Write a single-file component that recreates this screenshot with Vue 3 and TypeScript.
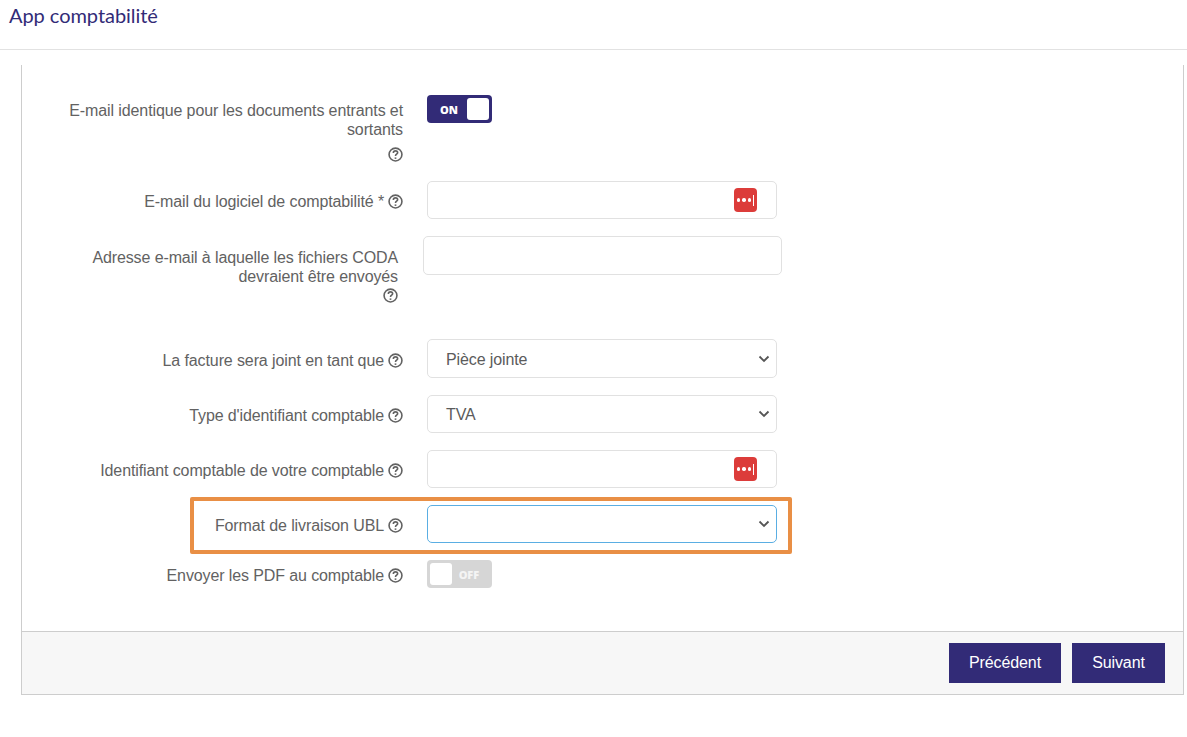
<script setup lang="ts">
interface Row {
  label: string[];
  kind: 'on' | 'off' | 'pass' | 'text' | 'select';
  value?: string;
  cls: string;
  iconBelow?: boolean;
  focus?: boolean;
}
const rows: Row[] = [
  { label: ['E-mail identique pour les documents entrants et', 'sortants'], kind: 'on', cls: 'r1', iconBelow: true },
  { label: ['E-mail du logiciel de comptabilité *'], kind: 'pass', cls: 'r2' },
  { label: ['Adresse e-mail à laquelle les fichiers CODA', 'devraient être envoyés'], kind: 'text', cls: 'r3', iconBelow: true },
  { label: ['La facture sera joint en tant que'], kind: 'select', value: 'Pièce jointe', cls: 'r4' },
  { label: ["Type d'identifiant comptable"], kind: 'select', value: 'TVA', cls: 'r5' },
  { label: ['Identifiant comptable de votre comptable'], kind: 'pass', cls: 'r6' },
  { label: ['Format de livraison UBL'], kind: 'select', value: '', cls: 'r7', focus: true },
  { label: ['Envoyer les PDF au comptable'], kind: 'off', cls: 'r8' },
];
</script>

<template>
  <div class="page">
    <header class="head"><h1>App comptabilité</h1></header>
    <section class="panel">
      <div class="body">
        <div v-for="r in rows" :key="r.cls" class="row" :class="r.cls">
          <div class="label">
            <template v-for="(l, i) in r.label" :key="i">
              <span class="line">{{ l }}<svg v-if="!r.iconBelow" class="help" viewBox="0 0 14 14"><circle cx="7" cy="7" r="6" /><path d="M5 5.5C5 4.2 6 3.6 7 3.6S9 4.3 9 5.4C9 6.7 7 6.8 7 8.3" /><path class="dot" d="M7 9.7v1.4" /></svg></span>
            </template>
            <span v-if="r.iconBelow" class="line iconline"><svg class="help" viewBox="0 0 14 14"><circle cx="7" cy="7" r="6" /><path d="M5 5.5C5 4.2 6 3.6 7 3.6S9 4.3 9 5.4C9 6.7 7 6.8 7 8.3" /><path class="dot" d="M7 9.7v1.4" /></svg></span>
          </div>
          <div class="control">
            <div v-if="r.kind === 'on'" class="toggle on"><b>ON</b><i></i></div>
            <div v-else-if="r.kind === 'off'" class="toggle off"><i></i><b>OFF</b></div>
            <div v-else-if="r.kind === 'pass'" class="field">
              <span class="lp"><em></em><em></em><em></em><u></u></span>
            </div>
            <div v-else-if="r.kind === 'text'" class="field wide"></div>
            <div v-else class="field sel" :class="{ focus: r.focus }">
              <span>{{ r.value }}</span>
              <svg class="chev" viewBox="0 0 12 8"><path d="M1.5 1.5 6 6l4.5-4.5" /></svg>
            </div>
          </div>
          <div v-if="r.focus" class="mark"></div>
        </div>
      </div>
      <footer class="foot">
        <button class="btn prev">Précédent</button>
        <button class="btn next">Suivant</button>
      </footer>
    </section>
  </div>
</template>

<style>
html, body { margin: 0; background: #fff; }
</style>

<style scoped>
.page { width: 1187px; height: 737px; overflow: hidden; background: #fff; font-family: "Liberation Sans", Arial, sans-serif; letter-spacing: -0.11px; }
.head { height: 49px; border-bottom: 1px solid #e2e2e2; }
h1 { margin: 0; padding: 2px 0 0 9px; font: 400 20px/26px Lato, sans-serif; letter-spacing: -0.05px; color: #322b77; }
.panel { margin: 15px 3px 0 21px; border: 1px solid #cdcdcd; border-top: 0; }
.body { height: 566px; box-sizing: border-box; padding-top: 30px; }
.row { display: flex; position: relative; }
.label { width: 381px; flex: none; display: flex; flex-direction: column; align-items: flex-end; text-align: right; font-size: 16px; line-height: 19px; color: #626262; }
.line { display: flex; align-items: center; white-space: nowrap; }
.iconline { height: 15px; margin-top: 8px; }
.r3 .iconline { margin-top: 2px; }
.control { margin-left: 24px; }
.help { width: 15px; height: 15px; margin-left: 4px; flex: none; fill: none; stroke: #626262; stroke-width: 1.5; }
.iconline .help { margin-left: 0; }
.help .dot { stroke-width: 1.6; }
.field { width: 350px; height: 38px; box-sizing: border-box; border: 1px solid #e1e1e1; border-radius: 5px; background: #fff; display: flex; align-items: center; position: relative; padding: 2px 0 0 18px; font-size: 16px; color: #5b5b5b; }
.wide { width: 359px; height: 39px; margin-left: -4px; }
.sel.focus { border-color: #5aaee3; }
.chev { position: absolute; right: 6px; top: 50%; margin-top: -4px; width: 12px; height: 8px; fill: none; stroke: #555; stroke-width: 1.8; }
.lp { position: absolute; left: 306px; top: 6px; width: 23px; height: 24px; background: #dc3c3a; border-radius: 4px; display: flex; align-items: center; justify-content: flex-start; padding-left: 3px; box-sizing: border-box; gap: 2px; }
.lp em { width: 3.4px; height: 3.4px; background: #fff; border-radius: 50%; }
.lp u { width: 1px; height: 11px; background: #fff; }
.toggle { width: 65px; height: 28px; box-sizing: border-box; border-radius: 4px; display: flex; align-items: center; font: 700 11px/1 "Open Sans", "Liberation Sans", sans-serif; color: #fff; }
.toggle i { width: 22px; height: 22px; background: #fff; border-radius: 3px; }
.on { background: #322b77; padding: 0 3px 0 13px; justify-content: space-between; }
.off { background: #d6d6d6; padding: 0 13px 0 3px; justify-content: space-between; color: #f4f4f4; }
.r1 { height: 86px; } .r1 .label { padding-top: 6px; }
.r2 { height: 55px; } .r2 .label { padding-top: 11px; }
.r3 { height: 103px; } .r3 .label { padding-top: 12px; padding-right: 5px; box-sizing: border-box; }
.r4 { height: 56px; } .r4 .label { padding-top: 12px; } .r4 .field { height: 39px; }
.r5 { height: 55px; } .r5 .label { padding-top: 11px; }
.r6 { height: 55px; } .r6 .label { padding-top: 11px; }
.r7 { height: 55px; } .r7 .label { padding-top: 11px; }
.r8 { height: 28px; } .r8 .label { padding-top: 6px; }
.mark { position: absolute; left: 168px; top: -8px; width: 602px; height: 57px; box-sizing: border-box; border: 4px solid #e98f45; border-radius: 2px; pointer-events: none; }
.foot { height: 63px; box-sizing: border-box; background: #f7f7f7; border-top: 1px solid #cdcdcd; display: flex; justify-content: flex-end; align-items: flex-start; gap: 11px; padding: 11px 18px 0 0; }
.btn { height: 40px; border: 0; background: #322b77; color: #fff; font: 400 16px "Liberation Sans", Arial, sans-serif; letter-spacing: -0.11px; padding: 0; }
.prev { width: 112px; }
.next { width: 93px; }
</style>
